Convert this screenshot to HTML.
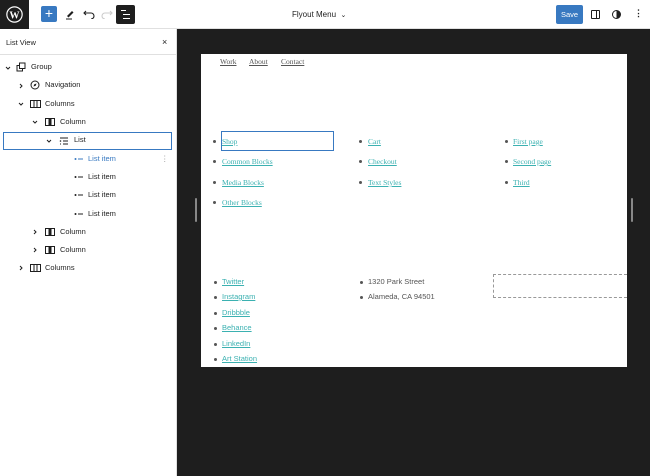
<!DOCTYPE html>
<html><head><style>
*{margin:0;padding:0;box-sizing:border-box}
body{width:650px;height:476px;overflow:hidden;background:#fff;font-family:"Liberation Sans",sans-serif;position:relative}
.a{position:absolute}
.top{left:0;top:0;width:650px;height:29px;background:#fff;border-bottom:1px solid #e0e0e0}
.t{font-size:8px;color:#1e1e1e;position:absolute;white-space:nowrap}
.row{position:absolute;font-size:7.5px;color:#1e1e1e;height:18px;line-height:18px;white-space:nowrap}
.ic{position:absolute}
.serif{font-family:"Liberation Serif",serif;font-size:7.5px;color:#3bb1b1;text-decoration:underline;position:absolute;white-space:nowrap}
.sans{font-size:7.5px;color:#3bb1b1;text-decoration:underline;position:absolute;white-space:nowrap}
.dot{position:absolute;width:3px;height:3px;border-radius:50%;background:#555}
</style></head><body>
<div class="a top"></div>
<div class="a" style="left:0;top:0;width:29px;height:29px;background:#1e1e1e"></div>
<svg class="a" style="left:6px;top:6px" width="17" height="17" viewBox="0 0 20 20"><circle cx="10" cy="10" r="9" fill="none" stroke="#fff" stroke-width="1.4"/><text x="10" y="14.5" fill="#fff" font-size="12" font-weight="bold" text-anchor="middle" font-family="Liberation Serif">W</text></svg>
<div class="a" style="left:41px;top:6px;width:16px;height:16px;background:#3879c1;border-radius:2px;color:#fff;font-size:14px;line-height:15px;text-align:center">+</div>
<svg class="a" style="left:64px;top:8px" width="12" height="12" viewBox="0 0 12 12"><path d="M3 8 L8 3 L9.5 4.5 L4.5 9.5Z" fill="#1e1e1e"/><path d="M2 11h6" stroke="#1e1e1e"/></svg>
<svg class="a" style="left:83px;top:9px" width="12" height="10" viewBox="0 0 12 10"><path d="M3 2 L1 4 L3 6 M1 4 H8 a3 3 0 0 1 0 6" fill="none" stroke="#1e1e1e" stroke-width="1.1"/></svg>
<svg class="a" style="left:101px;top:9px" width="12" height="10" viewBox="0 0 12 10"><path d="M9 2 L11 4 L9 6 M11 4 H4 a3 3 0 0 0 0 6" fill="none" stroke="#ccc" stroke-width="1.1"/></svg>
<div class="a" style="left:116px;top:5px;width:19px;height:19px;background:#1e1e1e;border-radius:2px"></div>
<svg class="a" style="left:120px;top:9px" width="11" height="11"><path d="M1 1.5h5M3 5.5h7M3 9.5h7" stroke="#fff" stroke-width="1.1"/></svg>
<div class="t" style="left:292px;top:10px">Flyout Menu&nbsp;&nbsp;<span style="font-size:7px">⌄</span></div>
<div class="a" style="left:556px;top:5px;width:27px;height:19px;background:#3879c1;border-radius:2px;color:#fff;font-size:7.5px;line-height:19px;text-align:center">Save</div>
<div class="a" style="left:591px;top:10px;width:9px;height:9px;border:1.2px solid #1e1e1e;border-radius:1px"></div>
<div class="a" style="left:596px;top:10px;width:1.2px;height:9px;background:#1e1e1e"></div>
<div class="a" style="left:612px;top:10px;width:9px;height:9px;border:1.2px solid #1e1e1e;border-radius:50%;background:linear-gradient(90deg,#fff 50%,#1e1e1e 50%)"></div>
<div class="t" style="left:634px;top:8px;font-size:9px;font-weight:bold">⋮</div>

<div class="a" style="left:176px;top:29px;width:1px;height:447px;background:#e0e0e0"></div>
<div class="a" style="left:0;top:54px;width:176px;height:1px;background:#e0e0e0"></div>
<div class="t" style="left:6px;top:38px;font-size:7.5px">List View</div>
<div class="t" style="left:162px;top:37px;font-size:9px">×</div>

<svg width="0" height="0" style="position:absolute"><defs>
<symbol id="dn" viewBox="0 0 6 6"><path d="M1 2 L3 4 L5 2" fill="none" stroke="#1e1e1e" stroke-width="1"/></symbol>
<symbol id="rt" viewBox="0 0 6 6"><path d="M2 1 L4 3 L2 5" fill="none" stroke="#1e1e1e" stroke-width="1"/></symbol>
<symbol id="grp" viewBox="0 0 10 10"><rect x="1" y="3.5" width="5.5" height="5.5" fill="none" stroke="#1e1e1e"/><rect x="3.5" y="1" width="5.5" height="5.5" fill="#fff" stroke="#1e1e1e"/></symbol>
<symbol id="nav" viewBox="0 0 10 10"><circle cx="5" cy="5" r="4" fill="none" stroke="#1e1e1e"/><path d="M6.5 3.5 L4.3 4.3 L3.5 6.5 L5.7 5.7Z" fill="#1e1e1e"/></symbol>
<symbol id="cols" viewBox="0 0 11 10"><rect x="0.5" y="1.5" width="10" height="7" fill="none" stroke="#1e1e1e"/><path d="M4 1.5v7M7 1.5v7" stroke="#1e1e1e"/></symbol>
<symbol id="col" viewBox="0 0 10 10"><rect x="0.5" y="1.5" width="9" height="7" fill="none" stroke="#1e1e1e"/><rect x="3.5" y="1.5" width="3" height="7" fill="#1e1e1e"/></symbol>
<symbol id="lst" viewBox="0 0 10 10"><path d="M1 2h8M4 5h5M4 8h5M1 8h1" stroke="#1e1e1e"/><circle cx="1.5" cy="5" r="0.8" fill="#1e1e1e"/></symbol>
<symbol id="li" viewBox="0 0 10 6"><circle cx="1.5" cy="3" r="1" fill="#1e1e1e"/><path d="M4 3h5" stroke="#1e1e1e"/></symbol>
<symbol id="lib" viewBox="0 0 10 6"><circle cx="1.5" cy="3" r="1" fill="#3879c1"/><path d="M4 3h5" stroke="#3879c1"/></symbol>
</defs></svg>

<div class="a" style="left:3px;top:132px;width:169px;height:18px;border:1px solid #3879c1"></div>
<svg class="ic" style="left:5px;top:65px" width="6" height="6"><use href="#dn"/></svg><svg class="ic" style="left:16px;top:62px" width="10" height="10"><use href="#grp"/></svg><div class="row" style="left:31px;top:58px">Group</div>
<svg class="ic" style="left:18px;top:83px" width="6" height="6"><use href="#rt"/></svg><svg class="ic" style="left:30px;top:80px" width="10" height="10"><use href="#nav"/></svg><div class="row" style="left:45px;top:76px">Navigation</div>
<svg class="ic" style="left:18px;top:101px" width="6" height="6"><use href="#dn"/></svg><svg class="ic" style="left:30px;top:99px" width="11" height="10"><use href="#cols"/></svg><div class="row" style="left:45px;top:95px">Columns</div>
<svg class="ic" style="left:32px;top:119px" width="6" height="6"><use href="#dn"/></svg><svg class="ic" style="left:45px;top:117px" width="10" height="10"><use href="#col"/></svg><div class="row" style="left:60px;top:113px">Column</div>
<svg class="ic" style="left:46px;top:138px" width="6" height="6"><use href="#dn"/></svg><svg class="ic" style="left:59px;top:136px" width="10" height="10"><use href="#lst"/></svg><div class="row" style="left:74px;top:131px">List</div>
<svg class="ic" style="left:74px;top:156px" width="10" height="6"><use href="#lib"/></svg><div class="row" style="left:88px;top:150px;color:#3879c1">List item</div><div class="row" style="left:161px;top:150px;color:#999">⋮</div>
<svg class="ic" style="left:74px;top:174px" width="10" height="6"><use href="#li"/></svg><div class="row" style="left:88px;top:168px">List item</div>
<svg class="ic" style="left:74px;top:192px" width="10" height="6"><use href="#li"/></svg><div class="row" style="left:88px;top:186px">List item</div>
<svg class="ic" style="left:74px;top:211px" width="10" height="6"><use href="#li"/></svg><div class="row" style="left:88px;top:205px">List item</div>
<svg class="ic" style="left:32px;top:229px" width="6" height="6"><use href="#rt"/></svg><svg class="ic" style="left:45px;top:227px" width="10" height="10"><use href="#col"/></svg><div class="row" style="left:60px;top:223px">Column</div>
<svg class="ic" style="left:32px;top:247px" width="6" height="6"><use href="#rt"/></svg><svg class="ic" style="left:45px;top:245px" width="10" height="10"><use href="#col"/></svg><div class="row" style="left:60px;top:241px">Column</div>
<svg class="ic" style="left:18px;top:265px" width="6" height="6"><use href="#rt"/></svg><svg class="ic" style="left:30px;top:263px" width="11" height="10"><use href="#cols"/></svg><div class="row" style="left:45px;top:259px">Columns</div>

<div class="a" style="left:177px;top:29px;width:473px;height:447px;background:#1e1e1e"></div>
<div class="a" style="left:195px;top:198px;width:2px;height:24px;background:#888;border-radius:1px"></div>
<div class="a" style="left:631px;top:198px;width:2px;height:24px;background:#888;border-radius:1px"></div>
<div class="a" style="left:201px;top:54px;width:426px;height:313px;background:#fff"></div>

<div class="serif" style="left:220px;top:57px;color:#555">Work</div>
<div class="serif" style="left:249px;top:57px;color:#555">About</div>
<div class="serif" style="left:281px;top:57px;color:#555">Contact</div>

<div class="a" style="left:221px;top:131px;width:113px;height:20px;border:1px solid #3879c1"></div>
<div class="dot" style="left:213px;top:140px"></div><div class="serif" style="left:222px;top:137px">Shop</div>
<div class="dot" style="left:213px;top:160px"></div><div class="serif" style="left:222px;top:157px">Common Blocks</div>
<div class="dot" style="left:213px;top:181px"></div><div class="serif" style="left:222px;top:178px">Media Blocks</div>
<div class="dot" style="left:213px;top:201px"></div><div class="serif" style="left:222px;top:198px">Other Blocks</div>
<div class="dot" style="left:359px;top:140px"></div><div class="serif" style="left:368px;top:137px">Cart</div>
<div class="dot" style="left:359px;top:160px"></div><div class="serif" style="left:368px;top:157px">Checkout</div>
<div class="dot" style="left:359px;top:181px"></div><div class="serif" style="left:368px;top:178px">Text Styles</div>
<div class="dot" style="left:505px;top:140px"></div><div class="serif" style="left:513px;top:137px">First page</div>
<div class="dot" style="left:505px;top:160px"></div><div class="serif" style="left:513px;top:157px">Second page</div>
<div class="dot" style="left:505px;top:181px"></div><div class="serif" style="left:513px;top:178px">Third</div>

<div class="dot" style="left:214px;top:281px"></div><div class="sans" style="left:222px;top:277px">Twitter</div>
<div class="dot" style="left:214px;top:296px"></div><div class="sans" style="left:222px;top:292px">Instagram</div>
<div class="dot" style="left:214px;top:312px"></div><div class="sans" style="left:222px;top:308px">Dribbble</div>
<div class="dot" style="left:214px;top:327px"></div><div class="sans" style="left:222px;top:323px">Behance</div>
<div class="dot" style="left:214px;top:343px"></div><div class="sans" style="left:222px;top:339px">LinkedIn</div>
<div class="dot" style="left:214px;top:358px"></div><div class="sans" style="left:222px;top:354px">Art Station</div>
<div class="dot" style="left:360px;top:281px"></div><div class="sans" style="left:368px;top:277px;color:#555;text-decoration:none">1320 Park Street</div>
<div class="dot" style="left:360px;top:296px"></div><div class="sans" style="left:368px;top:292px;color:#555;text-decoration:none">Alameda, CA 94501</div>
<div class="a" style="left:493px;top:274px;width:134px;height:24px;border:1px dashed #999;border-right:none"></div>
</body></html>
